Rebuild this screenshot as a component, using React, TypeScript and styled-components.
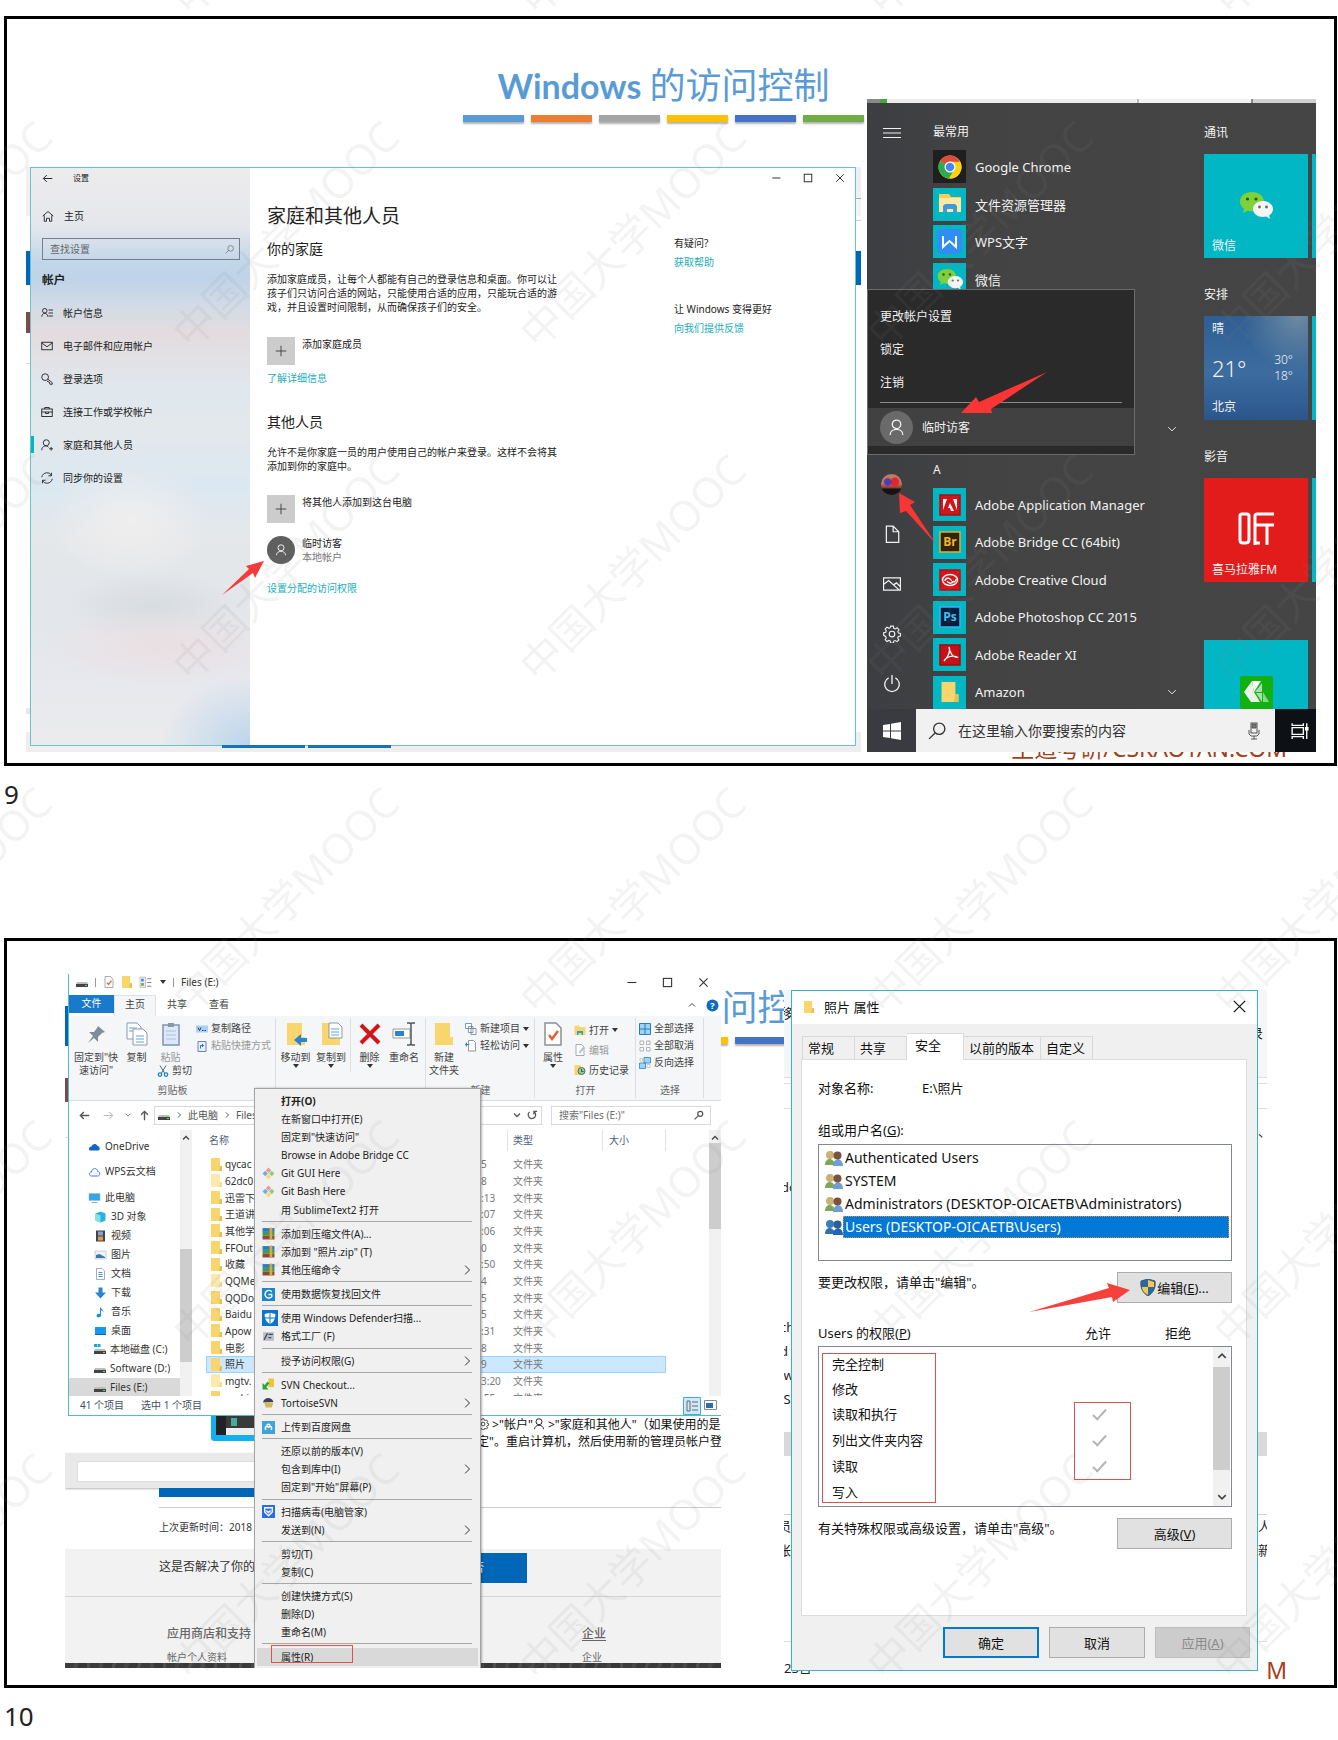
import React from 'react';
import styled, { createGlobalStyle, css } from 'styled-components';

const UI = '"Noto Sans", "Noto Sans CJK SC", sans-serif';
const TEAL = '#00b7c3';
const LINK = '#1aaebb';

const Global = createGlobalStyle`
  *, *::before, *::after { box-sizing: border-box; }
  body { margin: 0; background: #fff; font-family: ${UI}; color: #222; }
  button, input { font: inherit; color: inherit; margin: 0; padding: 0; border: 0; background: none; border-radius: 0; }
  button { cursor: pointer; text-align: left; }
  a { color: inherit; text-decoration: none; }
  h1, h2, h3, p, ul { margin: 0; padding: 0; font-weight: 400; list-style: none; }
  svg { display: block; flex: none; }
`;

/* ---------- document page ---------- */

const Page = styled.main`
  position: relative;
  overflow: hidden;
  padding: 16px 1px 0 4px;
`;
const Slide = styled.section`
  position: relative;
  height: 750px;
  border: 3px solid #000;
  overflow: hidden;
`;
const PageNumber = styled.div`
  height: 172px;
  padding: 13px 0 0;
  font-size: 26px;
  line-height: 30px;
`;
const LastNumber = styled(PageNumber)`
  height: 52px;
`;
const SlideHeader = styled.header`
  display: flex;
  flex-direction: column;
  align-items: center;
  gap: 9px;
  padding: 46px 14px 0 0;
`;
const SlideTitle = styled.h1`
  color: #5b9bd5;
  font-family: Lato, "Noto Sans CJK SC", sans-serif;
  font-weight: 700;
  font-size: 34px;
  line-height: 40px;
  white-space: nowrap;
  span { font-weight: 400; font-size: 36px; }
`;
const Stripes = styled.div`
  display: flex;
  gap: 7px;
`;
const Stripe = styled.i<{ $c: string }>`
  width: 61px;
  height: 7px;
  background: ${p => p.$c};
  box-shadow: 0 2px 2px rgba(0, 0, 0, 0.3);
`;
const Brand = styled.footer`
  position: absolute;
  right: 47px;
  bottom: 0;
  color: #a5401a;
  font-size: 23px;
  line-height: 30px;
`;
const Shot = styled.div<{ $x: number; $y: number; $w: number; $h: number }>`
  position: absolute;
  left: ${p => p.$x}px;
  top: ${p => p.$y}px;
  width: ${p => p.$w}px;
  height: ${p => p.$h}px;
  overflow: hidden;
  background: #fff;
`;
const Overlay = styled.svg<{ $x: number; $y: number }>`
  position: absolute;
  left: ${p => p.$x}px;
  top: ${p => p.$y}px;
`;
const Marks = styled.div`
  position: absolute;
  left: -235px;
  top: -266px;
  display: grid;
  grid-template-columns: repeat(5, 347px);
  grid-auto-rows: 333px;
  place-items: center;
  pointer-events: none;
  color: rgba(135, 135, 135, 0.1);
  font-size: 42px;
  font-weight: 400;
  line-height: 48px;
  white-space: nowrap;
  span { transform: rotate(-45deg); }
`;

const stripeColors = ['#5b9bd5', '#ed7d31', '#a5a5a5', '#ffc000', '#4472c4', '#70ad47'];
const Header = () => (
  <SlideHeader>
    <SlideTitle>Windows <span>的访问控制</span></SlideTitle>
    <Stripes>{stripeColors.map(c => <Stripe key={c} $c={c} />)}</Stripes>
  </SlideHeader>
);

/* ---------- shared drawings ---------- */

type LP = { s?: number; w?: number; c?: string; children: React.ReactNode };
const Line = ({ s = 12, w = 1, c = 'currentColor', children }: LP) => (
  <svg width={s} height={s} viewBox="0 0 16 16" fill="none" stroke={c} strokeWidth={w}>{children}</svg>
);
const Chevron = ({ dir, s = 8, w = 2 }: { dir: 'up' | 'down' | 'right'; s?: number; w?: number }) => (
  <Line s={s} w={w}>
    <path d={dir === 'up' ? 'M2 11l6-6 6 6' : dir === 'down' ? 'M2 5l6 6 6-6' : 'M5 1l7 7-7 7'} />
  </Line>
);
const Person = ({ s }: { s: number }) => (
  <Line s={s} w={1.2}><circle cx="8" cy="5" r="4" /><path d="M2 15c0-7 12-7 12 0" /></Line>
);
const Magnifier = ({ s }: { s: number }) => (
  <Line s={s} w={1.2}><circle cx="10" cy="6" r="5" /><path d="M6.500 9.500L1 15" /></Line>
);
const Gear = ({ s }: { s: number }) => (
  <Line s={s} w={1}>
    <circle cx="8" cy="8" r="2.500" />
    <path d="M6.800 1h2.400l.4 1.900 1.300.6 1.700-1 1.600 1.700-1 1.600.6 1.400 1.700.4v2.200l-1.800.4-.6 1.400 1 1.600-1.600 1.600-1.600-1-1.300.5-.4 1.700H6.800l-.4-1.800-1.300-.5-1.600 1-1.600-1.600 1-1.600-.6-1.300L.6 9.200V6.900l1.800-.4.5-1.300-1-1.600 1.600-1.700 1.700 1 1.200-.5z" />
  </Line>
);
const WindowButtons = ({ s = 10 }: { s?: number }) => (
  <>
    <button aria-label="最小化"><Line s={s} w={1.6}><path d="M2 8h13" /></Line></button>
    <button aria-label="最大化"><Line s={s} w={1.6}><rect x="2" y="2" width="12" height="12" /></Line></button>
    <button aria-label="关闭"><Line s={s} w={1.6}><path d="M2 2l12 12M14 2L2 14" /></Line></button>
  </>
);
const Folder = ({ s = 11, pale }: { s?: number; pale?: boolean }) => (
  <svg width={s} height={s + 2} viewBox="0 0 11 13">
    <path d="M0 0h9v8h2v5H0z" fill={pale ? '#fbe9ad' : '#f8d66d'} />
    <path d="M9 8h2v5H8z" fill={pale ? '#f3dd96' : '#e9bf4d'} />
  </svg>
);
const WeChat = ({ s }: { s: number }) => (
  <svg width={s} height={s} viewBox="0 0 34 34">
    <path d="M13 4C6 4 1 8 1 13.500c0 3 1.600 5.500 4 7.200L4 25l4.500-2.300c1.500.4 3 .6 4.500.6 7 0 12-4 12-9.500S20 4 13 4z" fill="#7ed13b" />
    <circle cx="8.500" cy="11" r="1.600" fill="#2c5a12" /><circle cx="17" cy="11" r="1.600" fill="#2c5a12" />
    <path d="M24 13c-5.500 0-10 3.500-10 8s4.500 8 10 8c1.200 0 2.300-.2 3.300-.5L31 31l-.8-3.600c2.200-1.400 3.800-3.800 3.800-6.400 0-4.500-4.500-8-10-8z" fill="#f4f6f4" />
    <circle cx="20.500" cy="19" r="1.400" fill="#666" /><circle cx="27.500" cy="19" r="1.400" fill="#666" />
  </svg>
);

/* ---------- settings window ---------- */

const EdgeStrip = styled.div`
  height: 100%;
  background:
    linear-gradient(#f0f0f0 0 49px, #fff 49px 84px, #0067b8 84px 118px, #fff 118px 145px,
      #7b4a4a 145px 166px, #fff 166px 196px, #ddd 196px 197px, #fff 197px 541px, #e4e9ea 541px 547px, #fff 547px 565px, #eee 565px) 0 0 / 10px 100% no-repeat,
    linear-gradient(#f0f0f0 0 31px, #8db4cc 31px 32px, #f4f4f4 32px 49px, #fff 49px 53px, #ccc 53px 54px, #fff 54px 84px,
      #0067b8 84px 118px, #fff 118px 565px, #eee 565px) 10px 0 no-repeat;
`;
const BlueTabs = styled.div`
  position: absolute;
  left: 196px;
  bottom: 4px;
  display: flex;
  gap: 3px;
  i { width: 83px; height: 3px; background: #1673b8; }
`;
const SettingsWindow = styled.div`
  position: absolute;
  inset: 0 5px 6px 4px;
  display: grid;
  grid-template-columns: 219px 424px 1fr;
  border: 1px solid #6cc3cc;
  background: #fff;
  font-size: 10px;
  line-height: 14px;
`;
const Sidebar = styled.nav`
  position: relative;
  padding: 0 10px 0 11px;
  background:
    radial-gradient(90px 70px at 100% 100%, #bcd5ec, transparent),
    radial-gradient(120px 40px at 60% 83%, rgba(235, 222, 224, 0.9), transparent),
    radial-gradient(90px 36px at 55% 76%, rgba(214, 219, 224, 0.9), transparent),
    radial-gradient(80px 60px at 45% 61%, rgba(240, 238, 238, 1), transparent),
    linear-gradient(#ececed 0, #e6e7ec 10%, #c3d7ea 16%, #bed3e8 19%, #d3dbe6 24%, #e3dcde 29%, #e3e0e3 32%,
      #dfe8ee 39%, #e4e8eb 45%, #dbe8f1 55%, #e5e8ea 64%, #e3e6ea 76%, #e6e8ee 86%, #ebebec 100%);
`;
const SideTitle = styled.div`
  display: flex;
  align-items: center;
  gap: 20px;
  height: 20px;
  font-size: 8px;
`;
const HomeRow = styled.a`
  display: flex;
  align-items: center;
  gap: 10px;
  height: 22px;
  margin-top: 17px;
`;
const SearchBox = styled.label`
  display: flex;
  align-items: center;
  height: 22px;
  margin-top: 11px;
  padding: 0 5px 0 7px;
  border: 1px solid #767e87;
  color: #666;
  input { flex: 1; min-width: 0; outline: 0; }
  input::placeholder { color: #666; opacity: 1; }
`;
const SideHeading = styled.h3`
  height: 20px;
  margin: 9px 0 7px;
  line-height: 20px;
  font-weight: 700;
`;
const SideItem = styled.a<{ $on?: boolean }>`
  display: flex;
  align-items: center;
  gap: 10px;
  height: 33px;
  margin: 0 -10px 0 -11px;
  padding-left: 10px;
  ${p => p.$on && css`background: linear-gradient(${TEAL}, ${TEAL}) 0 50% / 3px 17px no-repeat;`}
`;
const SettingsMain = styled.div`
  padding: 36px 0 0 17px;
`;
const MainTitle = styled.h2`
  font-size: 19px;
  line-height: 24px;
`;
const SubTitle = styled.h3<{ $top: number }>`
  margin-top: ${p => p.$top}px;
  font-size: 14px;
  line-height: 20px;
`;
const Para = styled.p`
  width: 299px;
  margin-top: 13px;
`;
const ActionRow = styled.button<{ $top: number }>`
  display: flex;
  gap: 7px;
  margin-top: ${p => p.$top}px;
  small { display: block; font-size: 10px; color: #777; }
`;
const PlusBox = styled.span<{ $round?: boolean }>`
  display: grid;
  place-items: center;
  width: 28px;
  height: 28px;
  background: ${p => (p.$round ? '#5f5f5f' : '#ccc')};
  color: ${p => (p.$round ? '#fff' : '#444')};
  border-radius: ${p => (p.$round ? '50%' : '0')};
`;
const TealLink = styled.a<{ $top: number }>`
  display: block;
  margin-top: ${p => p.$top}px;
  color: ${LINK};
`;
const SettingsAside = styled.aside`
  position: relative;
  padding-top: 68px;
  p + a + p { margin-top: 33px; }
`;
const Controls = styled.div<{ $gap: number; $right: number; $top: number }>`
  position: absolute;
  top: ${p => p.$top}px;
  right: ${p => p.$right}px;
  display: flex;
  gap: ${p => p.$gap}px;
  color: #333;
`;

const sideItems: [string, React.ReactNode][] = [
  ['帐户信息', <><circle cx="5" cy="5" r="3" /><path d="M1 13c0-6 8-6 8 0M10 4h6M10 8h6M10 12h6" /></>],
  ['电子邮件和应用帐户', <><rect x="1" y="3" width="14" height="10" /><path d="M1 4l7 5 7-5" /></>],
  ['登录选项', <><circle cx="5.500" cy="5.500" r="4.500" /><path d="M9 8l6 5v2h-3l-1-3-3-1" /></>],
  ['连接工作或学校帐户', <><rect x="1" y="4" width="14" height="10" /><path d="M5 4V2h6v2M1 8h14M6 8v2h4V8" /></>],
  ['家庭和其他人员', <><circle cx="7" cy="5" r="4" /><path d="M1 15c0-6 6-7 9-4M11 13h5M13.500 10.500v5" /></>],
  ['同步你的设置', <><path d="M1 7c1-7 11-8 13-2M15 9c-1 7-11 8-13 2M14 1v4h-4M2 15v-4h4" /></>],
];

const Plus = () => <Line s={12} w={1.3}><path d="M8 1v14M1 8h14" /></Line>;

const Settings = () => (
  <Shot $x={19} $y={148} $w={835} $h={585}>
    <EdgeStrip />
    <SettingsWindow>
      <Sidebar>
        <SideTitle>
          <button aria-label="返回"><Line s={11} w={1.400}><path d="M15 8H2M7 3L2 8l5 5" /></Line></button>设置
        </SideTitle>
        <HomeRow href="#home"><Line s={12} w={1.2}><path d="M1 8l7-6 7 6M3 7v8h3v-4h4v4h3V7" /></Line>主页</HomeRow>
        <SearchBox><input aria-label="查找设置" placeholder="查找设置" /><Magnifier s={9} /></SearchBox>
        <SideHeading>帐户</SideHeading>
        {sideItems.map(([t, d], i) => (
          <SideItem key={t} href={'#s' + i} $on={i === 4}><Line s={12} w={1.2}>{d}</Line>{t}</SideItem>
        ))}
      </Sidebar>
      <SettingsMain>
        <MainTitle>家庭和其他人员</MainTitle>
        <SubTitle $top={11}>你的家庭</SubTitle>
        <Para>添加家庭成员，让每个人都能有自己的登录信息和桌面。你可以让孩子们只访问合适的网站，只能使用合适的应用，只能玩合适的游戏，并且设置时间限制，从而确保孩子们的安全。</Para>
        <ActionRow $top={23}><PlusBox><Plus /></PlusBox>添加家庭成员</ActionRow>
        <TealLink href="#more" $top={6}>了解详细信息</TealLink>
        <SubTitle $top={27}>其他人员</SubTitle>
        <Para>允许不是你家庭一员的用户使用自己的帐户来登录。这样不会将其添加到你的家庭中。</Para>
        <ActionRow $top={22}><PlusBox><Plus /></PlusBox>将其他人添加到这台电脑</ActionRow>
        <ActionRow $top={13}>
          <PlusBox $round><Person s={12} /></PlusBox>
          <span>临时访客<small>本地帐户</small></span>
        </ActionRow>
        <TealLink href="#assign" $top={17}>设置分配的访问权限</TealLink>
      </SettingsMain>
      <SettingsAside>
        <Controls $top={5} $right={10} $gap={22}><WindowButtons /></Controls>
        <p>有疑问?</p>
        <TealLink href="#help" $top={5}>获取帮助</TealLink>
        <p>让 Windows 变得更好</p>
        <TealLink href="#feedback" $top={5}>向我们提供反馈</TealLink>
      </SettingsAside>
    </SettingsWindow>
    <BlueTabs><i /><i /></BlueTabs>
  </Shot>
);

/* ---------- start menu ---------- */

const TopStrip = styled.div`
  height: 4px;
  background: linear-gradient(90deg, #888 0 13px, #45a83a 13px 20px, #ececec 20px 270px, #bbb 270px 272px, #f2f2f2 272px 384px, #888 384px 386px, #d0d0d0 386px);
`;
const MenuBody = styled.div`
  display: grid;
  grid-template: 606px / 49px 288px 1fr;
  height: 606px;
  overflow: hidden;
  background: linear-gradient(90deg, #3d3e42, #434343 25%, #454545);
  color: #f2f2f2;
`;
const Rail = styled.nav`
  display: flex;
  flex-direction: column;
  padding-top: 5px;
  button { display: grid; place-items: center; height: 50px; }
  button:nth-child(2) { margin-top: auto; }
`;
const Face = styled.span`
  width: 21px;
  height: 21px;
  border-radius: 50%;
  background:
    radial-gradient(circle at 32% 38%, #4a3fb0 0 15%, transparent 25%),
    radial-gradient(circle at 66% 38%, #e0262c 0 18%, transparent 28%),
    linear-gradient(#c87b5c 0 45%, #8a3d33 65%, #1a1212 72%);
`;
const AppColumn = styled.div`
  padding: 19px 22px 0 17px;
`;
const ColumnLabel = styled.h3<{ $top?: number }>`
  height: 20px;
  margin: ${p => p.$top || 0}px 0 8px;
  font-size: 12px;
  line-height: 20px;
`;
const AppList = styled.ul<{ $h: number }>`
  display: flex;
  flex-direction: column;
  justify-content: space-between;
  height: ${p => p.$h}px;
  font-size: 13px;
`;
const AppItem = styled.button`
  display: flex;
  align-items: center;
  width: 100%;
  height: 33px;
  gap: 9px;
  > svg:last-child { margin-left: auto; margin-right: 5px; }
`;
const AppTile = styled.span<{ $dark?: boolean }>`
  display: grid;
  place-items: center;
  width: 33px;
  height: 33px;
  background: ${p => (p.$dark ? '#1f1f1f' : TEAL)};
`;
const MoreRow = styled.div`
  display: flex;
  justify-content: flex-end;
  align-items: center;
  height: 33px;
  margin-top: 116px;
  padding-right: 5px;
`;
const TileColumn = styled.div`
  padding-top: 20px;
`;
const TileHeading = styled.h3`
  height: 20px;
  font-size: 12px;
  line-height: 20px;
`;
const TileRow = styled.div`
  display: grid;
  grid-template-columns: 104px 104px;
  gap: 4px;
  margin: 11px 0 27px;
`;
const Tile = styled.button<{ $bg?: string }>`
  display: flex;
  flex-direction: column;
  align-items: center;
  height: 104px;
  background: ${p => p.$bg || TEAL};
  font-size: 12px;
  line-height: 16px;
  > b + span { align-self: flex-start; margin: 0 0 4px 8px; }
`;
const LogoBox = styled.b<{ $bare?: boolean }>`
  display: grid;
  height: 104px;
  padding-top: ${p => (p.$bare ? 0 : 18)}px;
  place-items: center;
`;
const Weather = styled(Tile)`
  align-items: stretch;
  justify-content: space-between;
  padding: 5px 15px 5px 8px;
  background: radial-gradient(circle at 90% 0, #6e8aa3, transparent 40%), linear-gradient(#2e5e92, #3c6ca0 55%, #2b568c);
`;
const Temps = styled.span`
  display: flex;
  justify-content: space-between;
  align-items: center;
  font-size: 22px;
  font-weight: 300;
  line-height: 28px;
  span { font-size: 12px; line-height: 16px; }
`;
const UserMenu = styled.div`
  position: absolute;
  left: 0;
  top: 190px;
  width: 268px;
  height: 166px;
  padding-top: 9px;
  border: 1px solid #6b6b6b;
  background: #2a2a2a;
  color: #f2f2f2;
  font-size: 12px;
  button { display: block; width: 100%; height: 33px; padding-left: 12px; }
  hr { margin: 4px 12px 5px; border: 0; border-top: 1px solid #8b8b8b; }
  button:last-child { display: flex; align-items: center; gap: 9px; height: 38px; background: #414141; }
`;
const Avatar = styled.span`
  display: grid;
  place-items: center;
  width: 33px;
  height: 33px;
  border-radius: 50%;
  background: #6a6a6a;
`;
const Taskbar = styled.div`
  display: grid;
  grid-template-columns: 49px 1fr 41px;
  height: 43px;
  background: #3a3b40;
  color: #fff;
  > button { display: grid; place-items: center; }
  > button:last-child { padding-left: 8px; background: #0d1014; }
`;
const TaskSearch = styled.label`
  display: flex;
  align-items: center;
  gap: 12px;
  padding: 0 14px 0 12px;
  background: #f1f1f1;
  color: #333;
  font-size: 14px;
  input { flex: 1; min-width: 0; outline: 0; }
  input::placeholder { color: #333; opacity: 1; }
`;

const Badge = ({ bg, edge, children }: { bg: string; edge: string; children: React.ReactNode }) => (
  <svg width="22" height="22" viewBox="0 0 22 22">
    <rect x="1" y="1" width="20" height="20" fill={bg} stroke={edge} strokeWidth="1.500" />{children}
  </svg>
);
const badgeText = { textAnchor: 'middle' as const, fontSize: 12, fontWeight: 700, fontFamily: 'Open Sans' };
const Chrome = () => (
  <svg width="24" height="24" viewBox="0 0 24 24">
    <circle cx="12" cy="12" r="11.500" fill="#fcd116" />
    <path d="M12 12L2 6.200A11.500 11.500 0 0 1 22 6.200z" fill="#dd4b3e" />
    <path d="M12 12L2 6.200A11.500 11.500 0 0 0 11 23.500L16 15z" fill="#2da94f" />
    <path d="M12 6.700h10.200A11.500 11.500 0 0 1 11 23.500l5.500-9z" fill="#fcd116" />
    <circle cx="12" cy="12" r="5.500" fill="#fff" /><circle cx="12" cy="12" r="4.300" fill="#4688f1" />
  </svg>
);
const ExplorerIcon = () => (
  <svg width="24" height="22" viewBox="0 0 24 22">
    <path d="M1 3V1h10l2 3h10v15H1z" fill="#f6cf57" /><path d="M1 5h22v14H1z" fill="#ffe9a2" />
    <path d="M5 20v-7l2-2h10l2 2v7h-4v-4H9v4z" fill="#3c9bdc" />
  </svg>
);
const Wps = () => (
  <svg width="25" height="25" viewBox="0 0 25 25">
    <rect width="25" height="25" rx="5" fill="#2f8df5" />
    <path d="M6 7v11l6.500-6 6.500 6V7" fill="none" stroke="#fff" strokeWidth="2" />
  </svg>
);
const topApps: [string, React.ReactNode, boolean?][] = [
  ['Google Chrome', <Chrome />, true],
  ['文件资源管理器', <ExplorerIcon />],
  ['WPS文字', <Wps />],
  ['微信', <WeChat s={26} />],
];
const aApps: [string, React.ReactNode][] = [
  ['Adobe Application Manager', <Badge bg="#d0161b" edge="#a80f13"><path d="M4 16V5h4zM18 16V5h-4zM11 9l4 8h-3l-1-3H9z" fill="#fff" /></Badge>],
  ['Adobe Bridge CC (64bit)', <Badge bg="#2e2410" edge="#e8b023"><text x="11" y="15" fill="#f4b528" {...badgeText}>Br</text></Badge>],
  ['Adobe Creative Cloud', <Badge bg="#d3161c" edge="#b01116"><ellipse cx="11" cy="11" rx="7.500" ry="5.500" fill="none" stroke="#fff" strokeWidth="1.400" /><path d="M6 12c0-3 4-4 6-1s5 2 5-1M14 13c-2 2-5 1-6-1" fill="none" stroke="#fff" strokeWidth="1.300" /></Badge>],
  ['Adobe Photoshop CC 2015', <Badge bg="#0a1c3a" edge="#38b3f0"><text x="11" y="15" fill="#3fc0f8" {...badgeText}>Ps</text></Badge>],
  ['Adobe Reader XI', <Badge bg="#c81017" edge="#9c0c11"><path d="M10 3c2 4-1 10-5 14 2-4 8-6 13-4-4 1-7-4-8-10z" fill="none" stroke="#fff" strokeWidth="1.300" /></Badge>],
  ['Amazon', <Folder s={18} />],
];

const Start = () => (
  <Shot $x={860} $y={80} $w={449} $h={653}>
    <TopStrip />
    <MenuBody>
      <Rail>
        <button aria-label="展开"><Line s={18} w={1}><path d="M0 4h16M0 8h16M0 12h16" /></Line></button>
        <button aria-label="用户"><Face /></button>
        <button aria-label="文档"><Line s={18} w={1.1}><path d="M3 1h6l5 5v9.500H3zM9 1v5h5" /></Line></button>
        <button aria-label="图片"><Line s={18} w={1.1}><path d="M.5 2.500h15v11H.5zM1 8l4-3 9 8M9 9l3-2 3 3" /></Line></button>
        <button aria-label="设置"><Gear s={18} /></button>
        <button aria-label="电源"><Line s={18} w={1.2}><path d="M5 2.500a6.500 6.500 0 1 0 6 0M8 0v8" /></Line></button>
      </Rail>
      <AppColumn>
        <ColumnLabel>最常用</ColumnLabel>
        <AppList $h={146}>
          {topApps.map(([t, ic, d]) => <li key={t}><AppItem><AppTile $dark={d}>{ic}</AppTile>{t}</AppItem></li>)}
        </AppList>
        <MoreRow><Chevron dir="down" s={10} w={1.500} /></MoreRow>
        <ColumnLabel $top={15}>A</ColumnLabel>
        <AppList $h={221}>
          {aApps.map(([t, ic]) => (
            <li key={t}><AppItem><AppTile>{ic}</AppTile>{t}{t === 'Amazon' && <Chevron dir="down" s={10} w={1.500} />}</AppItem></li>
          ))}
        </AppList>
      </AppColumn>
      <TileColumn>
        <TileHeading>通讯</TileHeading>
        <TileRow><Tile><LogoBox><WeChat s={34} /></LogoBox><span>微信</span></Tile><Tile aria-label="应用" /></TileRow>
        <TileHeading>安排</TileHeading>
        <TileRow>
          <Weather><span>晴</span><Temps>21°<span>30°<br />18°</span></Temps><span>北京</span></Weather>
          <Tile aria-label="应用" />
        </TileRow>
        <TileHeading>影音</TileHeading>
        <TileRow>
          <Tile $bg="#e21b1b">
            <LogoBox>
              <svg width="36" height="34" viewBox="0 0 36 34" fill="none" stroke="#fff" strokeWidth="3">
                <path d="M7 31H5q-3 0-3-3V4q0-2 2-2h5q2 0 2 2v24q0 3-4 3M36 2H19q-2 0-2 2v29M17 13h19M29 13v20M17 31h5" />
              </svg>
            </LogoBox>
            <span>喜马拉雅FM</span>
          </Tile>
          <Tile aria-label="应用" />
        </TileRow>
        <TileHeading />
        <TileRow>
          <Tile aria-label="应用">
            <LogoBox $bare>
              <svg width="33" height="33" viewBox="0 0 33 33">
                <rect width="33" height="33" rx="2" fill="#13b013" />
                <path d="M12 5L4 16l7 10h9l-6-10z" fill="#e9f4e9" /><path d="M12 5h9l-7 11z" fill="#fff" />
                <path d="M22 7v9h-7zM16 17h6v9z" fill="#a9e0a9" /><path d="M23 16l6 10h-6z" fill="#8ad58a" />
              </svg>
            </LogoBox>
          </Tile>
        </TileRow>
      </TileColumn>
    </MenuBody>
    <Taskbar>
      <button aria-label="开始">
        <svg width="18" height="18" viewBox="0 0 18 18" fill="#fff"><path d="M0 3l7-1v6.500H0zM8 1.800L18 0v8.500H8zM0 9.500h7V16l-7-1zM8 9.500h10V18L8 16.200z" /></svg>
      </button>
      <TaskSearch>
        <Magnifier s={18} />
        <input aria-label="搜索" placeholder="在这里输入你要搜索的内容" />
        <svg width="14" height="18" viewBox="0 0 14 18" fill="none" stroke="#555"><rect x="4" y="1" width="6" height="10" /><path d="M5 2h4v4H5z" fill="#777" /><path d="M2 8v4l2 2h6l2-2V8M7 14v3M4 17h6" /></svg>
      </TaskSearch>
      <button aria-label="任务视图"><Line s={18} w={1.200}><path d="M1 1v2h10V1M1 5h10v6H1zM1 15v-2h10v2M14 1v14" /><path d="M13 5h2v2h-2z" fill="#fff" /></Line></button>
    </Taskbar>
    <UserMenu>
      <button>更改帐户设置</button>
      <button>锁定</button>
      <button>注销</button>
      <hr />
      <button><Avatar><Person s={17} /></Avatar>临时访客</button>
    </UserMenu>
  </Shot>
);

/* ---------- file explorer ---------- */

const ExplorerWindow = styled.div`
  position: absolute;
  inset: 0 0 auto 3px;
  height: 442px;
  border: solid #52bccb;
  border-width: 0 0 1px 1px;
  background: #fff;
  font-size: 10px;
  line-height: 13px;
  color: #333;
`;
const QuickBar = styled.div`
  display: flex;
  align-items: center;
  height: 21px;
  gap: 7px;
  padding: 0 12px 5px 7px;
  i { width: 1px; height: 9px; background: #999; }
  span { margin-right: auto; }
  button { margin-left: 18px; }
`;
const RibbonTabs = styled.div`
  display: flex;
  align-items: stretch;
  height: 21px;
  color: #444;
  > button { width: 42px; text-align: center; padding-bottom: 2px; }
  > button:first-child { width: 45px; height: 18px; background: #1979ca; color: #fff; }
  > button:nth-child(2) { padding-bottom: 3px; background: #f4f6f8; border: 1px solid #dfe3e8; border-bottom: 0; }
  > svg { margin: 6px 10px 0 auto; }
  > svg + svg { margin: 4px 2px 0 0; }
`;
const Ribbon = styled.div`
  display: flex;
  height: 85px;
  background: #f4f6f8;
  border-bottom: 1px solid #d9dce0;
  color: #444;
`;
const Group = styled.div<{ $w: number; $short?: boolean }>`
  display: flex;
  flex-direction: column;
  width: ${p => p.$w}px;
  background: linear-gradient(#dcdfe3, #dcdfe3) 100% 2px / 1px ${p => (p.$short ? '54px' : '80px')} no-repeat;
`;
const GroupBody = styled.div`
  display: flex;
  height: 66px;
`;
const GroupLabel = styled.span`
  line-height: 20px;
  text-align: center;
  color: #666;
`;
const BigButton = styled.button<{ $w: number; $dim?: boolean }>`
  display: flex;
  flex-direction: column;
  align-items: center;
  width: ${p => p.$w}px;
  padding-top: 6px;
  text-align: center;
  white-space: nowrap;
  color: ${p => (p.$dim ? '#999' : 'inherit')};
  svg { margin-bottom: 5px; }
  svg + span + svg { margin: 0; }
`;
const PasteStack = styled.div`
  width: 43px;
`;
const SmallStack = styled.div<{ $pitch: number }>`
  display: flex;
  flex-direction: column;
  padding: 4px 0 0 3px;
  button { display: flex; align-items: center; gap: 3px; height: ${p => p.$pitch}px; white-space: nowrap; }
`;
const CutButton = styled.button`
  display: flex;
  align-items: center;
  gap: 3px;
  padding-left: 7px;
`;
const Dim = styled.span`
  color: #999;
`;
const AddressRow = styled.div`
  display: flex;
  align-items: center;
  height: 29px;
  padding: 0 10px 1px 5px;
  color: #555;
  > button { flex: none; width: 20px; margin-right: 4px; display: grid; place-items: center; }
  > button:nth-child(3) { width: 12px; margin: 0; }
  > button:nth-child(4) { margin-right: 0; }
`;
const PathBox = styled.div`
  display: flex;
  flex: none;
  align-items: center;
  gap: 6px;
  width: 388px;
  height: 19px;
  margin-right: 9px;
  padding: 0 4px 0 3px;
  border: 1px solid #d9d9d9;
  > svg:nth-last-child(2) { margin-left: auto; }
`;
const FindBox = styled.label`
  display: flex;
  flex: 1;
  min-width: 0;
  align-items: center;
  height: 19px;
  padding: 0 6px 0 7px;
  border: 1px solid #d9d9d9;
  input { flex: 1; min-width: 0; outline: 0; }
  input::placeholder { color: #6d6d6d; opacity: 1; }
`;
const Panes = styled.div`
  display: grid;
  grid-template-columns: 111px 12px 1fr 12px;
  height: 266px;
  overflow: hidden;
`;
const Tree = styled.ul`
  padding-top: 4px;
  li:nth-child(3) { margin-top: 4px; }
`;
const TreeItem = styled.button<{ $lvl: number; $h: number; $on?: boolean }>`
  display: flex;
  align-items: center;
  gap: 4px;
  width: 100%;
  height: ${p => p.$h}px;
  padding-left: ${p => (p.$lvl ? 25 : 19)}px;
  white-space: nowrap;
  background: ${p => (p.$on ? '#d9d9d9' : 'none')};
`;
const Bar = styled.div<{ $pad: number; $thumb: number }>`
  display: flex;
  flex-direction: column;
  align-items: center;
  justify-content: space-between;
  padding: 4px 0;
  background: linear-gradient(#cdcdcd, #cdcdcd) 0 ${p => p.$pad}px / 100% ${p => p.$thumb}px no-repeat #f1f1f1;
  color: #444;
`;
const FileTable = styled.table`
  height: 276px;
  width: 460px;
  margin-left: 14px;
  border-collapse: collapse;
  table-layout: fixed;
  color: #777;
  line-height: 16px;
  th, td { padding: 0; text-align: left; font-weight: 400; white-space: nowrap; }
  th { height: 26px; vertical-align: top; color: #4c607a; }
  td:first-child { color: #333; }
`;
const Th = styled.div<{ $pl: number }>`
  height: 21px;
  padding-left: ${p => p.$pl}px;
  line-height: 21px;
  border-right: 1px solid #e2e2e2;
`;
const FileRow = styled.tr<{ $on: boolean }>`
  ${p => p.$on && css`background: #cce8ff; outline: 1px solid #99d1ff; outline-offset: -1px;`}
  td:nth-child(3) { padding-left: 5px; }
`;
const FileName = styled.span`
  display: flex;
  align-items: center;
  gap: 3px;
  height: 16px;
  padding-left: 5px;
`;
const StatusBar = styled.div`
  display: flex;
  align-items: center;
  gap: 17px;
  height: 19px;
  padding: 0 4px 0 11px;
  color: #3f4f66;
  > svg:first-of-type { margin-left: auto; }
  > svg + svg { margin-left: -14px; }
`;

const Drive = ({ win }: { win?: boolean }) => (
  <svg width="12" height="11" viewBox="0 0 12 11">
    {win && <path d="M0 0h3v3H0zM3.500 0h3v3h-3z" fill="#19a7d8" />}
    <path d="M1 5h10l1 2H0z" fill="#bcbcbc" /><path d="M0 7h12v3H0z" fill="#444" /><path d="M9 8h2v1H9z" fill="#5d5" />
  </svg>
);
const S = ({ w = 12, h = 12, children }: { w?: number; h?: number; children: React.ReactNode }) => (
  <svg width={w} height={h} viewBox="0 0 24 24" preserveAspectRatio="xMidYMid">{children}</svg>
);
const Caret = () => <svg width="6" height="4" viewBox="0 0 6 4"><path d="M0 0h6L3 4z" fill="#333" /></svg>;
const Sheet = ({ check }: { check?: boolean }) => (
  <><path d="M4 1h11l5 5v17H4z" fill="#fff" stroke="#8b9099" strokeWidth="1.500" />{check && <path d="M8 13l3 4 6-8" fill="none" stroke="#e2602c" strokeWidth="2.500" />}</>
);
const Pages = () => (
  <g fill="#fff" stroke="#8d99a8"><path d="M2 1h10l4 4v12H2z" /><path d="M8 7h10l4 4v12H8z" /><path d="M4 6h8M4 9h4M11 14h8M11 17h8M11 20h8" stroke="#5aa6e0" /></g>
);
const Bigfold = () => <path d="M3 1h15v14h3v8H3z" fill="#f8d66d" />;

const tree: [string, React.ReactNode, number, number][] = [
  ['OneDrive', <S w={13}><path d="M2 19c-3-5 2-8 4-8 2-6 9-7 12-1 5 0 6 8 2 9z" fill="#1566c0" /></S>, 0, 25],
  ['WPS云文档', <S w={13}><path d="M6 20c-6-1-5-8 0-8 1-9 12-9 12-1 6 0 6 9 0 9z" fill="#fff" stroke="#3a78e0" strokeWidth="2" /></S>, 0, 25],
  ['此电脑', <S w={13}><path d="M1 3h22v14H1z" fill="#36a6ea" stroke="#9fb3c2" /><path d="M6 20h12v2H6z" fill="#9aa" /></S>, 0, 19],
  ['3D 对象', <S w={13}><path d="M12 1l10 4v14l-10 4-10-4V5z" fill="#29b3d8" /><path d="M2 5l10 4v14L2 19z" fill="#7fe0ee" /></S>, 1, 19],
  ['视频', <S w={13}><path d="M3 1h18v22H3z" fill="#444" /><path d="M7 3h10v8H7z" fill="#7fa6dc" /><path d="M7 13h10v8H7z" fill="#d3a04e" /></S>, 1, 19],
  ['图片', <S w={13}><path d="M1 4h22v16H1z" fill="#eef3f7" stroke="#9aa" /><path d="M3 12l7-2 11 6v2H3z" fill="#3579b5" /></S>, 1, 19],
  ['文档', <S w={13}><Sheet /><path d="M8 9h8M8 13h8M8 17h8" stroke="#4b93c8" strokeWidth="2" /></S>, 1, 19],
  ['下载', <S w={13}><path d="M8 1h8v10h7L12 23 1 11h7z" fill="#2a84d2" /></S>, 1, 19],
  ['音乐', <S w={13}><path d="M11 1c1 5 7 5 7 12-2-4-4-4-5-4v10c0 5-9 5-9 0 0-4 5-4 7-3z" fill="#1f8fe0" /></S>, 1, 19],
  ['桌面', <S w={13}><path d="M1 4h22v16H1z" fill="#1698ee" /><path d="M1 18h22v2H1z" fill="#1263a8" /></S>, 1, 19],
  ['本地磁盘 (C:)', <Drive win />, 1, 19],
  ['Software (D:)', <Drive />, 1, 19],
  ['Files (E:)', <Drive />, 1, 19],
];
const files: [string, string, boolean?][] = [
  ['qycac', '5'], ['62dc0', '8', true], ['迅雷下', ':13'], ['王道讲', ':07'], ['其他学', ':06'], ['FFOut', '0'], ['收藏', ':50'],
  ['QQMe', '4', true], ['QQDo', '5'], ['Baidu', '5'], ['Apow', ':31'], ['电影', '8'], ['照片', '9'], ['mgtv.', '3:20', true], ['mobi', ':55'],
];

/* context menu */

const Menu = styled.ul`
  position: absolute;
  left: 189px;
  top: 114px;
  display: flex;
  flex-direction: column;
  justify-content: space-between;
  width: 227px;
  height: 582px;
  padding: 3px 2px 3px;
  background: #f0f0f0;
  border: 1px solid #a3a3a3;
  box-shadow: 1px 0 2px rgba(0, 0, 0, 0.3);
  font-size: 10px;
  line-height: 14px;
  color: #222;
`;
const MenuItem = styled.button<{ $on?: boolean; $bold?: boolean }>`
  display: grid;
  grid-template-columns: 19px 1fr 16px;
  align-items: center;
  width: 100%;
  height: 18px;
  padding-left: 5px;
  font-weight: ${p => (p.$bold ? 700 : 400)};
  background: ${p => (p.$on ? '#d9d9d9' : 'none')};
  white-space: nowrap;
`;
const MenuLine = styled.li`
  height: 1px;
  margin: 2px 6px 3px 5px;
  background: #a8a8a8;
`;
const RedFrame = styled.i<{ $x: number; $y: number; $w: number; $h: number }>`
  position: absolute;
  left: ${p => p.$x}px;
  top: ${p => p.$y}px;
  width: ${p => p.$w}px;
  height: ${p => p.$h}px;
  border: 1px solid #d9534f;
`;
const Git = <S w={13} h={13}><path d="M12 1l5 5-5 5-5-5z" fill="#e79a9a" /><path d="M6 7l5 5-5 5-5-5z" fill="#7aa7ea" /><path d="M18 7l5 5-5 5-5-5z" fill="#8fcf7b" /><path d="M12 13l5 5-5 5-5-5z" fill="#f0dc7a" /></S>;
const Rar = <S w={13} h={13}><path d="M1 2h22v7H1z" fill="#2c7ac0" /><path d="M1 9h22v7H1z" fill="#3f9a55" /><path d="M1 16h22v7H1z" fill="#8a4a3a" /><path d="M14 1h5v22h-5z" fill="#e0a83a" /></S>;
const box = (bg: string, d: string) => <S w={13} h={13}><path d="M0 0h24v24H0z" fill={bg} /><path d={d} fill="none" stroke="#fff" strokeWidth="2.500" /></S>;
type MI = { t: string; i?: React.ReactNode; sub?: boolean } | null;
const menu: MI[] = [
  { t: '打开(O)' }, { t: '在新窗口中打开(E)' }, { t: '固定到"快速访问"' }, { t: 'Browse in Adobe Bridge CC' },
  { t: 'Git GUI Here', i: Git }, { t: 'Git Bash Here', i: Git }, { t: '用 SublimeText2 打开' }, null,
  { t: '添加到压缩文件(A)...', i: Rar }, { t: '添加到 "照片.zip" (T)', i: Rar }, { t: '其他压缩命令', i: Rar, sub: true }, null,
  { t: '使用数据恢复找回文件', i: box('#1d86c9', 'M18 7a7 7 0 1 0 0 9v-4h-6') }, null,
  { t: '使用 Windows Defender扫描...', i: <S w={16} h={16}><path d="M0 0h24v24H0z" fill="#0a74d0" /><path d="M12 4l8 2c0 7-2 12-8 15-6-3-8-8-8-15z" fill="#fff" /><path d="M12 4v17M4 12h16" stroke="#0a74d0" strokeWidth="1.500" /></S> },
  { t: '格式工厂 (F)', i: <S w={13} h={13}><path d="M2 4h20v16H2z" fill="#b9bfca" /><path d="M4 18L10 6M12 8h8M12 14h5" stroke="#445" strokeWidth="2.500" /></S> }, null,
  { t: '授予访问权限(G)', sub: true }, null,
  { t: 'SVN Checkout...', i: <S w={13} h={13}><path d="M12 1h10v16H12z" fill="#eec437" /><path d="M14 9L8 17l4 4H1V9l4 4 5-6z" fill="#2fa437" /></S> },
  { t: 'TortoiseSVN', i: <S w={13} h={13}><path d="M2 12c1-11 17-11 19-1z" fill="#39425f" /><path d="M4 12h17l-3 9H7z" fill="#d9b65c" /></S>, sub: true }, null,
  { t: '上传到百度网盘', i: box('#3fa2dc', 'M8 16a3 3 0 1 1 4-3 3 3 0 1 1 4 3M9 9a3 3 0 1 1 6 0') }, null,
  { t: '还原以前的版本(V)' }, { t: '包含到库中(I)', sub: true }, { t: '固定到"开始"屏幕(P)' }, null,
  { t: '扫描病毒(电脑管家)', i: box('#2a6fe0', 'M5 5h14v8l-7 7-7-7zM8 10l4 4 4-4') }, { t: '发送到(N)', sub: true }, null,
  { t: '剪切(T)' }, { t: '复制(C)' }, null,
  { t: '创建快捷方式(S)' }, { t: '删除(D)' }, { t: '重命名(M)' }, null,
  { t: '属性(R)' },
];

/* web page showing below the explorer window */

const WebPage = styled.div`
  display: flex;
  flex-direction: column;
  height: 100%;
  padding-top: 442px;
  font-size: 12px;
  color: #333;
  > * { flex-shrink: 0; }
`;
const WebIntro = styled.div`
  display: flex;
  height: 37px;
  padding-left: 146px;
  line-height: 17px;
  white-space: nowrap;
  color: #111;
  p { margin-left: 206px; flex: none; }
  svg { display: inline-block; vertical-align: -1px; }
`;
const Thumb = styled.div`
  flex: none;
  width: 60px;
  height: 25px;
  border: solid #12b0f0;
  border-width: 0 0 6px 5px;
  border-radius: 0 0 0 4px;
  background:
    linear-gradient(#3fae9a, #3fae9a) 15px 2px / 6px 8px no-repeat,
    linear-gradient(90deg, #222 0 10px, transparent 10px),
    linear-gradient(#3a3a3a 0 12px, #eee 12px);
`;
const Band = styled.div`
  width: 300px;
  height: 35px;
  padding: 8px 0 6px 12px;
  background: #e9e9e9;
  box-shadow: 0 1px 2px rgba(0, 0, 0, 0.3);
  div { height: 21px; background: #fff; border: 1px solid #ddd; }
`;
const BlueBar = styled.div`
  width: 150px;
  height: 9px;
  margin-left: 94px;
  background: #0067b8;
`;
const Updated = styled.p`
  height: 42px;
  margin: 10px 0 0 94px;
  border-top: 1px solid #ccc;
  font-size: 10px;
  line-height: 38px;
`;
const Ask = styled.div`
  display: flex;
  height: 47px;
  padding: 4px 0 0 94px;
  background: #f2f2f2;
  line-height: 28px;
  button { width: 98px; height: 30px; margin-left: 174px; background: #0067b8; color: #fff; text-align: center; }
`;
const WebFooter = styled.div`
  display: grid;
  grid-template-columns: 415px 1fr;
  height: 67px;
  align-content: start;
  padding: 26px 0 0 102px;
  background: #f2f2f2;
  border-top: 1px solid #d5d5d5;
  color: #666;
  line-height: 22px;
  overflow: hidden;
  b { font-weight: 500; }
  small { font-size: 10px; line-height: 24px; }
  u { text-underline-offset: 2px; }
`;
const Rocks = styled.div`
  height: 5px;
  background: repeating-linear-gradient(100deg, #3c3c3c 0 9px, #484848 9px 13px, #383838 13px 22px, #524e4a 22px 25px);
`;
const LeftEdge = styled.div`
  position: absolute;
  inset: 0 auto auto 0;
  width: 3px;
  height: 442px;
  background: linear-gradient(#fff 0 32px, #0067b8 32px 72px, #fff 72px 104px, #7b4a4a 104px 128px, #fff 128px 163px, #ddd 163px 164px, #fff 164px);
`;

const Explorer = () => (
  <Shot $x={58} $y={33} $w={656} $h={694}>
    <WebPage>
      <WebIntro>
        <Thumb />
        <p><Gear s={12} /> &gt;"帐户"<Person s={12} /> &gt;"家庭和其他人"（如果使用的是<br />定"。重启计算机，然后使用新的管理员帐户登录</p>
      </WebIntro>
      <Band><div /></Band>
      <BlueBar />
      <Updated>上次更新时间：2018</Updated>
      <Ask>这是否解决了你的<button>否</button></Ask>
      <WebFooter><b>应用商店和支持</b><b><u>企业</u></b><small>帐户个人资料</small><small><u>企业</u></small></WebFooter>
      <Rocks />
    </WebPage>
    <LeftEdge />
    <ExplorerWindow>
      <QuickBar>
        <Drive /><i />
        <S><Sheet check /></S><Folder s={10} />
        <S w={14} h={13}><path d="M1 2h10v19H1z" fill="#eef" stroke="#999" /><path d="M3 5h5v5H3z" fill="#4a90c8" /><path d="M3 13h5v5H3z" fill="#6a4" /><path d="M14 5h8M14 12h8M14 19h8" stroke="#888" strokeWidth="2" /></S>
        <Caret /><i /><span>Files (E:)</span>
        <WindowButtons s={11} />
      </QuickBar>
      <RibbonTabs>
        <button>文件</button><button>主页</button><button>共享</button><button>查看</button>
        <Chevron dir="up" s={8} />
        <svg width="13" height="13" viewBox="0 0 13 13"><circle cx="6.500" cy="6.500" r="6" fill="#0f6cbd" /><text x="6.500" y="10" textAnchor="middle" fontSize="9" fontWeight="700" fill="#fff">?</text></svg>
      </RibbonTabs>
      <Ribbon>
        <Group $w={207}>
          <GroupBody>
            <BigButton $w={54}><S w={24} h={24}><path d="M14 4l7 6-3 1-4 4v5l-4-4-6 5 5-7-4-4h5l3-4z" fill="#7f8c99" /></S><span>固定到"快<br />速访问"</span></BigButton>
            <BigButton $w={27}><S w={24} h={24}><Pages /></S>复制</BigButton>
            <PasteStack>
              <BigButton $w={41} $dim><S w={24} h={24}><path d="M4 3h16v20H4z" fill="#dfe8f7" stroke="#7d93c0" strokeWidth="1.500" /><path d="M9 1h6v4H9z" fill="#8797b0" /><path d="M7 9h10M7 13h10M7 17h10" stroke="#aabfe4" /></S>粘贴</BigButton>
              <CutButton><S><path d="M6 1l9 15M18 1L9 16" stroke="#567" strokeWidth="2" /><circle cx="6" cy="19" r="3.500" fill="none" stroke="#1f7fc8" strokeWidth="2.500" /><circle cx="18" cy="19" r="3.500" fill="none" stroke="#1f7fc8" strokeWidth="2.500" /></S>剪切</CutButton>
            </PasteStack>
            <SmallStack $pitch={17}>
              <button><S><path d="M0 5h24v14H0z" fill="#a9d1f2" /><path d="M4 9l3 6 3-6M12 15h3M17 15h3" stroke="#246" fill="none" strokeWidth="2" /></S>复制路径</button>
              <button><S><path d="M4 3h16v20H4z" fill="#e8effa" stroke="#6b86b8" strokeWidth="2" /><path d="M9 17v-6h6M12 8l3 3-3 3" fill="none" stroke="#356ab8" strokeWidth="2" /></S><Dim>粘贴快捷方式</Dim></button>
            </SmallStack>
          </GroupBody>
          <GroupLabel>剪贴板</GroupLabel>
        </Group>
        <Group $w={75} $short>
          <GroupBody>
            <BigButton $w={39}><S w={24} h={24}><Bigfold /><path d="M23 16h-6v-4l-7 6 7 6v-4h6z" fill="#2a84d2" /></S><span>移动到</span><Caret /></BigButton>
            <BigButton $w={32}><S w={24} h={24}><Bigfold /><path d="M10 1h9l4 4v11H10z" fill="#fff" stroke="#8d99a8" /><path d="M12 7h8M12 10h8M12 13h8" stroke="#5aa6e0" /></S><span>复制到</span><Caret /></BigButton>
          </GroupBody>
        </Group>
        <Group $w={75}>
          <GroupBody>
            <BigButton $w={37}><S w={24} h={24}><path d="M3 3l18 18M21 3L3 21" stroke="#d1161b" strokeWidth="4" /></S><span>删除</span><Caret /></BigButton>
            <BigButton $w={32}><S w={24} h={24}><path d="M1 7h17v9H1z" fill="#fff" stroke="#999" /><path d="M3 9h9v5H3z" fill="#2a84d2" /><path d="M15 1h3l1 1 1-1h3M19 2v20M15 23h3l1-1 1 1h3" fill="none" stroke="#555" strokeWidth="1.500" /></S>重命名</BigButton>
          </GroupBody>
        </Group>
        <Group $w={109}>
          <GroupBody>
            <BigButton $w={36}><S w={24} h={24}><Bigfold /></S><span>新建<br />文件夹</span></BigButton>
            <SmallStack $pitch={17}>
              <button><S><path d="M1 1h12v10H1zM7 7h9v12H7zM12 11h10v12H12z" fill="#fff" stroke="#5b7a98" strokeWidth="1.500" /></S>新建项目 <Caret /></button>
              <button><S><path d="M7 1h10l4 4v17H7z" fill="#fff" stroke="#777" strokeWidth="1.500" /><path d="M11 8H4V4L0 9l4 5v-4z" fill="#1f7fc8" /></S>轻松访问 <Caret /></button>
            </SmallStack>
          </GroupBody>
          <GroupLabel>新建</GroupLabel>
        </Group>
        <Group $w={101}>
          <GroupBody>
            <BigButton $w={36}><S w={24} h={24}><Sheet check /></S><span>属性</span><Caret /></BigButton>
            <SmallStack $pitch={20}>
              <button><S><path d="M1 3h9l2 3h11v16H1z" fill="#f8d66d" /><path d="M6 22v-8h12v8h-3v-4H9v4z" fill="#26a3c8" /></S>打开 <Caret /></button>
              <button><S><Sheet /><path d="M9 17l9-11 3 3-9 10z" fill="#a9bfe8" /></S><Dim>编辑</Dim></button>
              <button><S><path d="M1 2h13v20H1z" fill="#f8d66d" /><circle cx="15" cy="14" r="7" fill="#8fd08a" stroke="#567" strokeWidth="2" /><path d="M15 10v5h4" stroke="#264" fill="none" strokeWidth="2" /></S>历史记录</button>
            </SmallStack>
          </GroupBody>
          <GroupLabel>打开</GroupLabel>
        </Group>
        <Group $w={68}>
          <GroupBody>
            <SmallStack $pitch={17}>
              <button><S><path d="M1 1h22v22H1z" fill="#9cd4f5" stroke="#2b7cb8" strokeWidth="2" /><path d="M12 1v22M1 12h22" stroke="#2b7cb8" strokeWidth="2" /></S>全部选择</button>
              <button><S><path d="M2 2h7v7H2zM15 2h7v7h-7zM2 15h7v7H2zM15 15h7v7h-7z" fill="#fff" stroke="#999" strokeWidth="1.500" /></S>全部取消</button>
              <button><S><path d="M10 1h13v11H10zM1 12h12v11H1z" fill="#9cd4f5" stroke="#2b7cb8" strokeWidth="1.500" /><path d="M2 3h5v5H2zM16 15h6v6h-6z" fill="#fff" stroke="#999" /></S>反向选择</button>
            </SmallStack>
          </GroupBody>
          <GroupLabel>选择</GroupLabel>
        </Group>
      </Ribbon>
      <AddressRow>
        <button aria-label="后退"><Line s={11} w={2}><path d="M15 8H2M7 3L2 8l5 5" /></Line></button>
        <button aria-label="前进"><Line s={11} w={1.500} c="#bbb"><path d="M1 8h13M9 3l5 5-5 5" /></Line></button>
        <button aria-label="最近"><Chevron dir="down" s={6} /></button>
        <button aria-label="上移"><Line s={11} w={2}><path d="M8 15V2M3 7l5-5 5 5" /></Line></button>
        <PathBox>
          <Drive /><Chevron dir="right" s={6} w={2.500} />此电脑<Chevron dir="right" s={6} w={2.500} />Files
          <Chevron dir="down" s={8} w={2.500} />
          <Line s={10} w={2}><path d="M4 3a6 6 0 1 0 7-.5M11 7V2h5" /></Line>
        </PathBox>
        <FindBox><input aria-label="搜索" placeholder={'搜索"Files (E:)"'} /><Line s={10} w={2}><circle cx="10" cy="6" r="4" /><path d="M7 9l-6 6" /></Line></FindBox>
      </AddressRow>
      <Panes>
        <Tree>
          {tree.map(([t, ic, l, h]) => (
            <li key={t}><TreeItem $lvl={l} $h={h} $on={t === 'Files (E:)'}>{ic}{t}</TreeItem></li>
          ))}
        </Tree>
        <Bar $pad={119} $thumb={113}><Chevron dir="up" w={2.500} /><Chevron dir="down" w={2.500} /></Bar>
        <FileTable>
          <colgroup><col style={{ width: 275 }} /><col style={{ width: 27 }} /><col style={{ width: 95 }} /><col style={{ width: 63 }} /></colgroup>
          <thead><tr><th><Th $pl={3}>名称</Th></th><th><Th $pl={0} /></th><th><Th $pl={5}>类型</Th></th><th><Th $pl={6}>大小</Th></th></tr></thead>
          <tbody>
            {files.map(([n, d, pale]) => (
              <FileRow key={n} $on={n === '照片'}>
                <td><FileName><Folder s={11} pale={pale} />{n}</FileName></td><td>{d}</td><td>文件夹</td><td />
              </FileRow>
            ))}
          </tbody>
        </FileTable>
        <Bar $pad={13} $thumb={86}><Chevron dir="up" w={2.500} /><Chevron dir="down" w={2.500} /></Bar>
      </Panes>
      <StatusBar>
        <span>41 个项目</span><span>选中 1 个项目</span>
        <svg width="18" height="18" viewBox="0 0 18 18"><path d="M.5.5h17v17H.5z" fill="#cfeaf6" stroke="#3fb0d4" /><path d="M4 4h3v10H4zM9 5h6M9 9h6M9 13h6" fill="none" stroke="#667" /></svg>
        <svg width="13" height="11" viewBox="0 0 13 11"><path d="M.5.5h12v9H.5z" fill="#fff" stroke="#889" /><path d="M2 3h7v5H2z" fill="#2c6ea8" /></svg>
      </StatusBar>
    </ExplorerWindow>
    <Menu>
      {menu.map((m, i) => m === null ? <MenuLine key={i} role="separator" /> : (
        <li key={i}>
          <MenuItem $bold={i === 0} $on={m.t === '属性(R)'}>
            {m.i || <span />}<span>{m.t}</span>{m.sub && <Chevron dir="right" s={10} w={1.500} />}
          </MenuItem>
        </li>
      ))}
    </Menu>
    <RedFrame $x={206} $y={671} $w={82} $h={18} />
  </Shot>
);

/* ---------- properties dialog ---------- */

const Behind = styled.div`
  position: absolute;
  inset: 0 0 8px;
  overflow: hidden;
  background: linear-gradient(#f4f6f8 0 87px, #ddd 87px 88px, #fff 88px 93px, #ddd 93px 94px, #fff 94px 118px, #ddd 118px 119px,
    #fff 119px 442px, #d9d9d9 442px 466px, #fff 466px 524px, #ccc 524px 525px, #fff 525px 651px, #ddd 651px 652px, #fff 652px);
  font-size: 13px;
  line-height: 24px;
  color: #222;
`;
const Scrap = styled.span<{ $x: number; $y: number }>`
  position: absolute;
  left: ${p => p.$x}px;
  top: ${p => p.$y}px;
  white-space: pre;
`;
const Dialog = styled.div`
  position: absolute;
  inset: 0 9px 11px 7px;
  display: flex;
  flex-direction: column;
  border: 1px solid #38b6bf;
  background: #f0f0f0;
  font-size: 13px;
  line-height: 20px;
  color: #111;
`;
const DialogTitle = styled.div`
  display: flex;
  align-items: center;
  gap: 10px;
  height: 33px;
  padding: 0 11px 2px 12px;
  background: #fff;
  button { margin-left: auto; }
`;
const DialogTabs = styled.div`
  display: flex;
  align-items: flex-end;
  height: 36px;
  margin-bottom: -1px;
  padding: 0 10px 0 10px;
`;
const DialogTab = styled.button<{ $w: number; $on?: boolean }>`
  width: ${p => p.$w}px;
  height: 24px;
  padding-left: ${p => (p.$on ? 8 : 5)}px;
  border: 1px solid #d9d9d9;
  border-width: 1px 1px 1px 0;
  white-space: nowrap;
  &:first-child { border-left-width: 1px; }
  ${p => p.$on && css`height: 27px; padding-bottom: 3px; background: #fff; border-bottom-color: #fff; z-index: 1;`}
`;
const Panel = styled.div`
  height: 557px;
  margin: 0 10px 0 9px;
  padding: 18px 14px 0 16px;
  border: 1px solid #dcdcdc;
  background: #fff;
  white-space: nowrap;
`;
const ObjectRow = styled.div`
  display: grid;
  grid-template-columns: 104px 1fr;
  margin-bottom: 22px;
`;
const Users = styled.ul`
  height: 117px;
  margin-top: 4px;
  padding-top: 1px;
  border: 1px solid #828790;
`;
const UserItem = styled.button<{ $on?: boolean }>`
  display: grid;
  grid-template-columns: 18px 1fr;
  align-items: center;
  width: 100%;
  height: 23px;
  padding: 0 2px 0 6px;
  font-size: 14px;
  line-height: 22px;
  span { padding-left: 2px; ${p => p.$on && css`background: #0078d7; color: #fff; outline: 1px dotted #d98c3c; outline-offset: -1px;`} }
`;
const HintRow = styled.div`
  display: flex;
  justify-content: space-between;
  align-items: flex-start;
  height: 31px;
  margin-top: 11px;
`;
const PushButton = styled.button<{ $w: number; $main?: boolean }>`
  display: flex;
  align-items: center;
  justify-content: center;
  gap: 1px;
  width: ${p => p.$w}px;
  height: 31px;
  background: #e1e1e1;
  border: ${p => (p.$main ? '2px solid #0078d7' : '1px solid #adadad')};
  &:disabled { background: #ccc; border-color: #bfbfbf; color: #8a8a8a; }
`;
const PermHead = styled.div`
  display: grid;
  grid-template-columns: 240px 80px 80px;
  margin: 20px 0 3px;
  span { text-align: center; }
`;
const PermBox = styled.div`
  position: relative;
  display: grid;
  grid-template-columns: 1fr 17px;
  height: 161px;
  padding-right: 1px;
  border: 1px solid #828790;
`;
const PermTable = styled.table`
  height: 152px;
  margin-top: 5px;
  border-collapse: collapse;
  table-layout: fixed;
  th, td { padding: 0; font-weight: 400; text-align: left; }
  th { padding-left: 13px; width: 240px; }
  td { width: 80px; text-align: center; }
`;
const Tick = styled.input`
  appearance: none;
  width: 7px;
  height: 14px;
  margin: 0 0 5px 8px;
  vertical-align: middle;
  border: solid #b4b4b4;
  border-width: 0 2px 2px 0;
  transform: rotate(42deg);
`;
const DialogFooter = styled.div`
  display: flex;
  justify-content: flex-end;
  gap: 10px;
  padding: 11px 7px 0;
`;

const Pair = ({ on }: { on?: boolean }) => (
  <svg width="18" height="16" viewBox="0 0 18 16">
    <path d="M0 15c0-8 9-8 10 0z" fill={on ? '#2f6fae' : '#7fa65a'} /><circle cx="5" cy="5" r="4" fill={on ? '#3a7db8' : '#c9b276'} />
    <path d="M8 16c0-9 10-9 10 0z" fill={on ? '#1f67b5' : '#6e9fd4'} /><circle cx="12.500" cy="5.500" r="4" fill={on ? '#2b5f96' : '#7a5340'} />
  </svg>
);
const perms: [string, boolean][] = [['完全控制', false], ['修改', false], ['读取和执行', true], ['列出文件夹内容', true], ['读取', true], ['写入', false]];
const users = ['Authenticated Users', 'SYSTEM', 'Administrators (DESKTOP-OICAETB\\Administrators)', 'Users (DESKTOP-OICAETB\\Users)'];

const Properties = () => (
  <Shot $x={777} $y={49} $w={483} $h={692}>
    <Behind>
      <Scrap $x={-4} $y={11}>移</Scrap>
      <Scrap $x={-3} $y={185}>do</Scrap>
      <Scrap $x={-4} $y={325}>ch{'\n'}d{'\n'} w{'\n'} S</Scrap>
      <Scrap $x={-6} $y={524}>员{'\n'}帐</Scrap>
      <Scrap $x={0} $y={666}>23日</Scrap>
      <Scrap $x={466} $y={31}>录</Scrap>
      <Scrap $x={474} $y={129}>、</Scrap>
      <Scrap $x={474} $y={524}>人{'\n'}新</Scrap>
    </Behind>
    <Dialog role="dialog" aria-label="照片 属性">
      <DialogTitle>
        <Folder s={10} />照片 属性
        <button aria-label="关闭"><Line s={13} w={1.500}><path d="M1 1l14 14M15 1L1 15" /></Line></button>
      </DialogTitle>
      <DialogTabs>
        <DialogTab $w={53}>常规</DialogTab><DialogTab $w={52}>共享</DialogTab><DialogTab $w={57} $on>安全</DialogTab>
        <DialogTab $w={77}>以前的版本</DialogTab><DialogTab $w={52}>自定义</DialogTab>
      </DialogTabs>
      <Panel>
        <ObjectRow><span>对象名称:</span><span>E:\照片</span></ObjectRow>
        <div>组或用户名(<u>G</u>):</div>
        <Users>
          {users.map((u, i) => <li key={u}><UserItem $on={i === 3}><Pair on={i === 3} /><span>{u}</span></UserItem></li>)}
        </Users>
        <HintRow>
          要更改权限，请单击"编辑"。
          <PushButton $w={115}>
            <svg width="16" height="17" viewBox="0 0 16 17"><path d="M8 0l7 2c1 7-2 12-7 15C3 14 0 9 1 2z" fill="#2767b0" stroke="#456" /><path d="M8 1l6 2v5H8zM2 8h6v8C5 14 2 12 2 8z" fill="#f7c843" /></svg>
            <span>编辑(<u>E</u>)...</span>
          </PushButton>
        </HintRow>
        <PermHead><div>Users 的权限(<u>P</u>)</div><span>允许</span><span>拒绝</span></PermHead>
        <PermBox>
          <PermTable aria-label="Users 的权限">
            <tbody>
              {perms.map(([n, ok]) => (
                <tr key={n}><th scope="row">{n}</th><td>{ok && <Tick type="checkbox" defaultChecked disabled aria-label={n} />}</td><td /></tr>
              ))}
            </tbody>
          </PermTable>
          <Bar $pad={20} $thumb={103}><Chevron dir="up" s={10} w={2.500} /><Chevron dir="down" s={10} w={2.500} /></Bar>
          <RedFrame $x={3} $y={6} $w={114} $h={150} />
          <RedFrame $x={255} $y={55} $w={57} $h={78} />
        </PermBox>
        <HintRow>有关特殊权限或高级设置，请单击"高级"。<PushButton $w={115}><span>高级(<u>V</u>)</span></PushButton></HintRow>
      </Panel>
      <DialogFooter>
        <PushButton $w={96} $main>确定</PushButton>
        <PushButton $w={96}>取消</PushButton>
        <PushButton $w={95} disabled><span>应用(<u>A</u>)</span></PushButton>
      </DialogFooter>
    </Dialog>
  </Shot>
);

const App = () => (
  <Page>
    <Global />
    <Slide>
      <Header />
      <Brand>王道考研/CSKAOYAN.COM</Brand>
      <Settings />
      <Start />
      <Overlay $x={215} $y={541} width="43" height="36" viewBox="0 0 43 36"><path d="M0 35L27 9l-3-3L42 1 33 18l-2-5z" fill="#f23c3c" /></Overlay>
      <Overlay $x={953} $y={352} width="88" height="44" viewBox="0 0 88 44"><path d="M87 1L31 38l1 4L1 42 16 26l3 5z" fill="#fa3534" /></Overlay>
      <Overlay $x={891} $y={473} width="40" height="54" viewBox="0 0 40 54"><path d="M1 1l16 9-5 3 26 39L8 19l-6 2z" fill="#f93636" /></Overlay>
    </Slide>
    <PageNumber>9</PageNumber>
    <Slide>
      <Header />
      <Brand>王道考研/CSKAOYAN.COM</Brand>
      <Explorer />
      <Properties />
      <Overlay $x={1022} $y={340} width="102" height="32" viewBox="0 0 102 32"><path d="M0 31L80 7l-2-5 23 7-17 12-1-5z" fill="#f5403c" /></Overlay>
    </Slide>
    <LastNumber>10</LastNumber>
    <Marks aria-hidden="true">{Array.from({ length: 30 }, (_, i) => <span key={i}>中国大学MOOC</span>)}</Marks>
  </Page>
);

export default App;
